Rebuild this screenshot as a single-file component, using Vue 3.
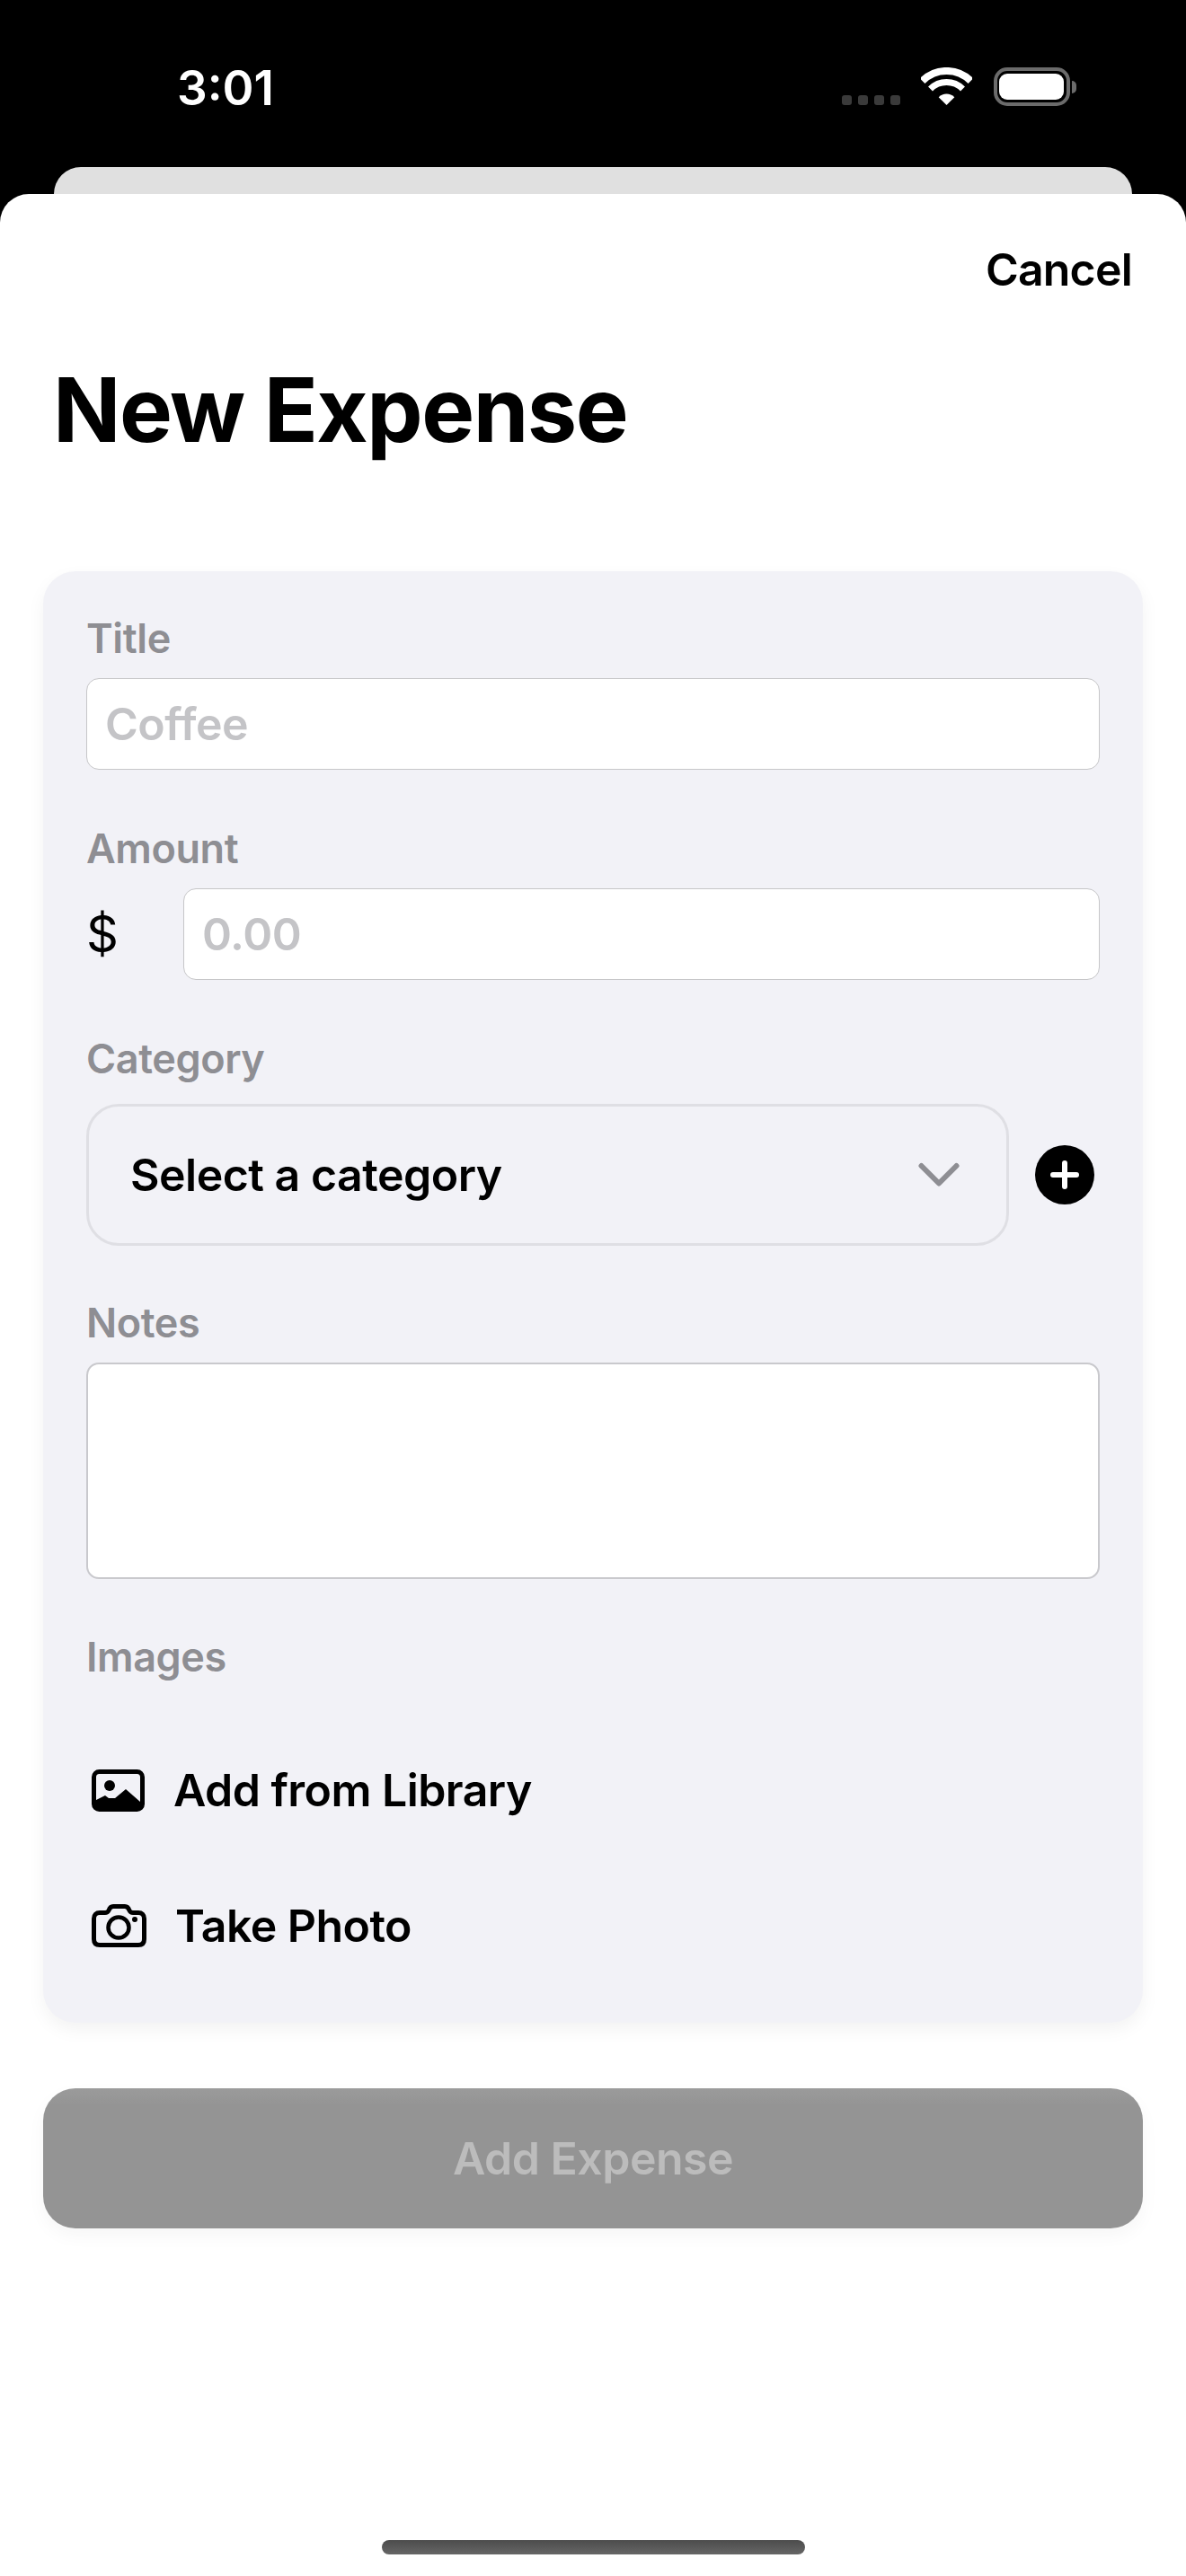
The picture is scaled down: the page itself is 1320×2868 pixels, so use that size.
<script setup>
import {ref} from "vue";

const title = ref("");
const amount = ref("");
const notes = ref("");
</script>

<template>
  <div class="screen">
    <div class="status-bar">
      <span class="time">3:01</span>
      <div class="status-icons">
        <div class="dots"><i></i><i></i><i></i><i></i></div>
        <svg class="wifi" width="57" height="42" viewBox="0 0 57 42">
          <path d="M1.6 15.1A38 38 0 0 1 55.4 15.1" fill="none" stroke="#fff" stroke-width="8"/>
          <path d="M10.5 24A25.5 25.5 0 0 1 46.5 24" fill="none" stroke="#fff" stroke-width="7"/>
          <path d="M28.5 42L19.7 33.2A12.5 12.5 0 0 1 37.3 33.2Z" fill="#fff"/>
        </svg>
        <div class="battery">
          <div class="battery-level"></div>
          <div class="battery-nub"></div>
        </div>
      </div>
    </div>
    <div class="back-card"></div>

    <div class="sheet">
      <div class="sheet-top">
        <button class="cancel">Cancel</button>
      </div>
      <h1>New Expense</h1>

      <div class="card">
        <label>Title</label>
        <input class="field title-field" type="text" placeholder="Coffee" v-model="title">

        <label class="next">Amount</label>
        <div class="amount-row">
          <span class="dollar">$</span>
          <input class="field" type="text" placeholder="0.00" v-model="amount">
        </div>

        <label class="next">Category</label>
        <div class="category-row">
          <div class="select">
            <span>Select a category</span>
            <svg width="46" height="28" viewBox="0 0 46 28">
              <path d="M3.5 4L23 23.5L42.5 4" fill="none" stroke="#8e8e93" stroke-width="6" stroke-linecap="round" stroke-linejoin="round"/>
            </svg>
          </div>
          <svg class="plus" width="66" height="66" viewBox="0 0 66 66">
            <circle cx="33" cy="33" r="33" fill="#000"/>
            <path d="M33 20V46M20 33H46" stroke="#fff" stroke-width="6" stroke-linecap="round"/>
          </svg>
        </div>

        <label class="after-select">Notes</label>
        <textarea class="notes" v-model="notes"></textarea>

        <label class="after-notes">Images</label>
        <div class="image-row first">
          <svg width="59" height="47" viewBox="0 0 59 47">
            <rect x="2.5" y="2.5" width="54" height="42" rx="6" fill="none" stroke="#000" stroke-width="5"/>
            <circle cx="20" cy="18" r="6" fill="#000"/>
            <path d="M3 35L15 29L19 32L26 32L38 22L54 36V43H3Z" fill="#000"/>
          </svg>
          <span>Add from Library</span>
        </div>
        <div class="image-row">
          <svg width="61" height="48" viewBox="0 0 61 48">
            <path d="M9 9.5H15C17 9.5 18 9 19 7C20 4 21 2.5 24 2.5H37C40 2.5 41 4 42 7C43 9 44 9.5 46 9.5H52C56 9.5 58.5 12 58.5 16V39C58.5 43.5 56 45.5 52 45.5H9C5 45.5 2.5 43.5 2.5 39V16C2.5 12 5 9.5 9 9.5Z" fill="none" stroke="#000" stroke-width="5"/>
            <circle cx="30" cy="26" r="11.5" fill="none" stroke="#000" stroke-width="4.5"/>
            <circle cx="48" cy="17" r="3" fill="#000"/>
          </svg>
          <span>Take Photo</span>
        </div>
      </div>

      <button class="add-btn">Add Expense</button>
      <div class="home-bar"></div>
    </div>
  </div>
</template>

<style scoped>
.screen {
  width: 1320px;
  height: 2868px;
  background: #000;
  overflow: hidden;
  font-family: Inter, "Liberation Sans", sans-serif;
  display: flex;
  flex-direction: column;
}

.status-bar {
  height: 186px;
  flex-shrink: 0;
  display: flex;
  align-items: flex-start;
  justify-content: space-between;
  padding: 0 129px 0 197px;
  box-sizing: border-box;
}

.time {
  color: #fff;
  font-size: 53px;
  font-weight: 600;
  line-height: 60px;
  margin-top: 68px;
}

.status-icons {
  display: flex;
  align-items: flex-start;
  margin-top: 75px;
}

.dots {
  display: flex;
  gap: 7px;
  margin-top: 31px;
}

.dots i {
  width: 11px;
  height: 11px;
  border-radius: 3px;
  background: #3a3a3a;
}

.wifi {
  margin-left: 23px;
}

.battery {
  position: relative;
  margin-left: 24px;
  width: 85px;
  height: 43px;
  border: 4px solid #6b6b6b;
  border-radius: 15px;
  box-sizing: border-box;
}

.battery-level {
  position: absolute;
  left: 2px;
  top: 3px;
  right: 3px;
  bottom: 3px;
  background: #fff;
  border-radius: 9px;
}

.battery-nub {
  position: absolute;
  right: -11px;
  top: 11px;
  width: 5px;
  height: 14px;
  background: #6b6b6b;
  border-radius: 0 6px 6px 0;
}

.back-card {
  height: 30px;
  flex-shrink: 0;
  margin: 0 60px;
  background: #e0e0e0;
  border-radius: 30px 30px 0 0;
}

.sheet {
  flex: 1;
  background: #fff;
  border-radius: 32px 32px 0 0;
  padding: 0 48px;
  display: flex;
  flex-direction: column;
}

.sheet-top {
  display: flex;
  justify-content: flex-end;
  padding: 54px 12px 0 0;
}

.cancel {
  border: none;
  background: none;
  padding: 0;
  font-family: inherit;
  font-size: 50px;
  font-weight: 600;
  letter-spacing: -0.8px;
  line-height: 60px;
  color: #000;
}

h1 {
  margin: 66px 0 0 11px;
  font-size: 99px;
  font-weight: 700;
  letter-spacing: -1.5px;
  line-height: 120px;
  color: #000;
}

.card {
  margin-top: 120px;
  padding: 50px 48px 68px;
  background: #f2f2f7;
  border-radius: 36px;
  box-shadow: 0 8px 20px rgba(0, 0, 0, 0.05);
  display: flex;
  flex-direction: column;
}

label {
  display: block;
  font-size: 45px;
  font-weight: 600;
  letter-spacing: -0.4px;
  line-height: 50px;
  color: #8e8e93;
  margin-bottom: 19px;
}

label.next {
  margin-top: 63px;
}

label.after-select {
  margin-top: 61px;
}

label.after-notes {
  margin-top: 62px;
}

.field {
  flex: 1;
  min-width: 0;
  height: 102px;
  box-sizing: border-box;
  padding: 0 20px;
  font-family: inherit;
  font-size: 50px;
  font-weight: 600;
  letter-spacing: -0.5px;
  background: #fff;
  border: 1px solid #c6c6c8;
  border-radius: 14px;
  outline: none;
}

.title-field {
  flex: none;
}

.field::placeholder {
  color: #c4c4c7;
}

.amount-row {
  display: flex;
  align-items: center;
}

.dollar {
  width: 108px;
  flex-shrink: 0;
  font-size: 56px;
  box-sizing: border-box;
  color: #000;
}

.category-row {
  display: flex;
  align-items: center;
  gap: 29px;
  margin-top: 6px;
}

.select {
  flex: 1;
  height: 158px;
  box-sizing: border-box;
  border: 3px solid #dfdfe4;
  border-radius: 36px;
  padding: 0 52px 0 46px;
  display: flex;
  align-items: center;
  justify-content: space-between;
  font-size: 50px;
  font-weight: 600;
  letter-spacing: -0.5px;
  color: #000;
}

.plus {
  flex-shrink: 0;
  margin-right: 6px;
}

.notes {
  height: 241px;
  box-sizing: border-box;
  background: #fff;
  border: 2px solid #c9c9cd;
  border-radius: 14px;
  outline: none;
  resize: none;
  display: block;
}

.image-row {
  display: flex;
  align-items: center;
  gap: 32px;
  height: 80px;
  padding-left: 6px;
  margin-top: 71px;
  font-size: 50px;
  font-weight: 600;
  letter-spacing: -0.55px;
  color: #000;
}

.image-row.first {
  margin-top: 64px;
}

.add-btn {
  margin-top: 73px;
  height: 156px;
  flex-shrink: 0;
  border: none;
  border-radius: 36px;
  background: linear-gradient(#9b9b9b, #949494 12%);
  box-shadow: 0 8px 20px rgba(0, 0, 0, 0.04);
  font-family: inherit;
  font-size: 50px;
  font-weight: 600;
  letter-spacing: -0.5px;
  color: #bcbcbc;
}

.home-bar {
  width: 471px;
  height: 16px;
  border-radius: 8px;
  background: linear-gradient(#4c4c4c, #666);
  margin: 347px auto 0;
}
</style>

<style>
html, body {
  margin: 0;
  background: #000;
}
</style>
